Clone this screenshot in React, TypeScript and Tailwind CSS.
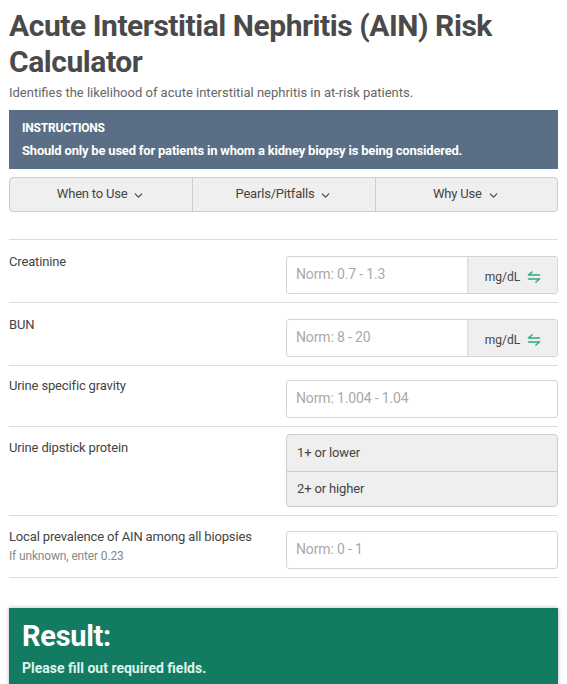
import { ChevronDown } from "lucide-react";

const font = { fontFamily: 'Roboto, "Liberation Sans", sans-serif' };

function SwapIcon() {
  return (
    <svg width="14" height="12" viewBox="0 0 14 12" fill="none" stroke="#2eab7b" strokeWidth="1.6" strokeLinecap="round">
      <path d="M1.5 4 H12.5 M1.5 4 L5 1" />
      <path d="M12.5 8 H1.5 M12.5 8 L9 11" />
    </svg>
  );
}

function NumberInput({ placeholder, unit }: { placeholder: string; unit?: string }) {
  return (
    <div className="flex h-[38px] w-[272px] overflow-hidden rounded-[3px] border border-[#d4d4d4] bg-white">
      <div className="flex flex-1 items-center px-[9px] text-[14px] tracking-[-0.15px] text-[#a9a9a9]">{placeholder}</div>
      {unit && (
        <div className="flex w-[90px] items-center justify-center gap-[7px] border-l-2 border-[#e2e2e2] bg-[#efefef] pt-[4px] text-[12px] text-[#444]">
          {unit}
          <SwapIcon />
        </div>
      )}
    </div>
  );
}

function Row({
  label,
  sub,
  children,
  top = "pt-[16px]",
  labelTop = "-mt-[2px]",
}: {
  label: string;
  sub?: string;
  children: React.ReactNode;
  top?: string;
  labelTop?: string;
}) {
  return (
    <div className={`flex justify-between border-t border-[#dcdcdc] ${top} pb-[8px]`}>
      <div className={`${labelTop} text-[13px] leading-[16px] tracking-[-0.15px] text-[#444]`}>
        <div>{label}</div>
        {sub && <div className="mt-[3px] text-[12px] text-[#888]">{sub}</div>}
      </div>
      {children}
    </div>
  );
}

export default function App() {
  return (
    <div className="min-h-[684px] overflow-hidden bg-white px-[9px] pt-[8px]" style={font}>
      <h1 className="text-[30px] font-bold leading-[36px] tracking-[-0.45px] text-[#4a4a4a]">
        Acute Interstitial Nephritis (AIN) Risk
        <br />
        Calculator
      </h1>
      <p className="mt-[3px] text-[13px] text-[#666]">
        Identifies the likelihood of acute interstitial nephritis in at-risk patients.
      </p>

      {/* Instructions */}
      <div className="mt-[7px] h-[59px] bg-[#5a6e85] px-[13px] pt-[10px] text-white">
        <div className="text-[12px] font-bold leading-[16px] tracking-[-0.2px]">INSTRUCTIONS</div>
        <div className="mt-[6px] text-[13px] font-bold leading-[18px] tracking-[-0.2px]">
          Should only be used for patients in whom a kidney biopsy is being considered.
        </div>
      </div>

      {/* Tabs */}
      <div className="mt-[8px] grid h-[35px] grid-cols-3 overflow-hidden rounded-[4px] border border-[#cdcdcd] bg-[#efefef] text-[13px] tracking-[-0.2px] text-[#444]">
        {["When to Use", "Pearls/Pitfalls", "Why Use"].map((t, i) => (
          <div key={t} className={`flex items-center justify-center gap-[5px] ${i > 0 ? "border-l border-[#cdcdcd]" : ""}`}>
            {t}
            <ChevronDown size={13} strokeWidth={2} className="mt-[2px]" />
          </div>
        ))}
      </div>

      <div className="mt-[27px]">
        <Row label="Creatinine">
          <NumberInput placeholder="Norm: 0.7 - 1.3" unit="mg/dL" />
        </Row>
        <Row label="BUN">
          <NumberInput placeholder="Norm: 8 - 20" unit="mg/dL" />
        </Row>
        <Row label="Urine specific gravity" top="pt-[14px]">
          <NumberInput placeholder="Norm: 1.004 - 1.04" />
        </Row>
        <Row label="Urine dipstick protein" top="pt-[7px]" labelTop="mt-[6px]">
          <div className="w-[272px] overflow-hidden rounded-[4px] border border-[#cdcdcd] bg-[#efefef] text-[13px] tracking-[-0.15px] text-[#444]">
            <div className="flex h-[36px] items-center px-[10px]">1+ or lower</div>
            <div className="flex h-[35px] items-center border-t border-[#cdcdcd] px-[10px]">2+ or higher</div>
          </div>
        </Row>
        <Row label="Local prevalence of AIN among all biopsies" sub="If unknown, enter 0.23" top="pt-[15px]">
          <NumberInput placeholder="Norm: 0 - 1" />
        </Row>
        <div className="border-t border-[#dcdcdc]" />
      </div>

      {/* Result */}
      <div className="mt-[30px] h-[90px] bg-[#137b62] px-[13px] pt-[11px] shadow-[0_0_4px_rgba(0,0,0,0.3)]">
        <div className="text-[29px] font-bold leading-[34px] tracking-[-0.3px] text-white">Result:</div>
        <div className="mt-[5px] text-[14px] font-bold text-[#dff3ec]">Please fill out required fields.</div>
      </div>
    </div>
  );
}
